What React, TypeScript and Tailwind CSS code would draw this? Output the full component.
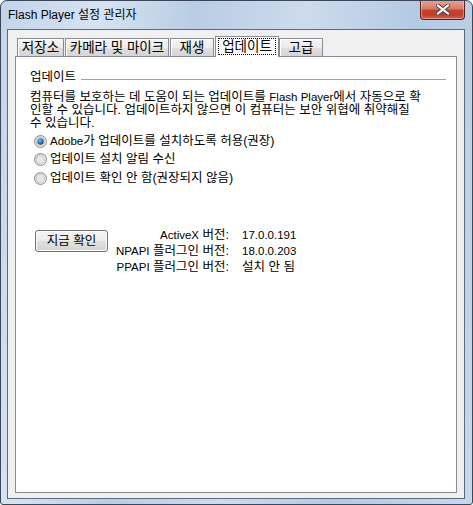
import React from 'react';

// Win7-style radio button drawn as svg
function Radio({ checked }: { checked?: boolean }) {
  return (
    <svg width="13" height="13" viewBox="0 0 13 13" className="shrink-0">
      <defs>
        <linearGradient id="rbg" x1="0" y1="0" x2="1" y2="1">
          <stop offset="0" stopColor="#cfcfcf" />
          <stop offset="1" stopColor="#f7f7f7" />
        </linearGradient>
        <radialGradient id="rdot" cx="0.4" cy="0.35" r="0.7">
          <stop offset="0" stopColor="#7ec4f5" />
          <stop offset="0.5" stopColor="#2a7fc6" />
          <stop offset="1" stopColor="#0f3f6e" />
        </radialGradient>
      </defs>
      <circle cx="6.5" cy="6.5" r="6" fill="url(#rbg)" stroke="#8e8f8f" strokeWidth="1" />
      <circle cx="6.5" cy="6.5" r="4.2" fill="#e6e6e6" stroke="#b9b9b9" strokeWidth="0.6" />
      {checked && <circle cx="6.5" cy="6.5" r="3.2" fill="url(#rdot)" />}
    </svg>
  );
}

// latin runs are a touch narrower than the hangul in the original
function L({ children }: { children: React.ReactNode }) {
  return <span className="text-[11.5px]">{children}</span>;
}

const tabs = [
  { label: '저장소', w: 'w-[47px]' },
  { label: '카메라 및 마이크', w: 'w-[104px]' },
  { label: '재생', w: 'w-[44px]' },
];

const tabBg =
  'bg-[linear-gradient(180deg,#f4f4f4_0%,#ececec_50%,#e0e0e0_51%,#d4d4d4_100%)]';

export default function App() {
  return (
    <div className="w-[473px] h-[505px] flex flex-col border border-[#3b4757] rounded-t-[7px] rounded-b-[3px] px-[6px] pr-[7px] pb-[5px] bg-[linear-gradient(100deg,#c2d5ea_0%,#d6e3f1_18%,#b8cde4_35%,#cddbed_55%,#b3cae3_75%,#c7d8ec_100%)] font-['Liberation_Sans','Noto_Sans_CJK_KR',sans-serif] text-[12.5px] text-black overflow-hidden">
      {/* Title bar */}
      <div className="h-[28px] flex items-start justify-between shrink-0">
        <div className="ml-[1px] h-[27px] flex items-center text-[12px] leading-[14px] text-black">
          Flash Player 설정 관리자
        </div>
        <div className="-mt-[1px] w-[45px] h-[20px] rounded-b-[4px] border border-[#5a2016] border-t-0 bg-[linear-gradient(180deg,#e7a797_0%,#d77c69_45%,#c2432c_55%,#c53f2a_80%,#d9654a_100%)] flex items-center justify-center shadow-[inset_0_0_0_1px_rgba(255,255,255,0.35)]">
          <svg width="14" height="11" viewBox="0 0 14 11">
            <path d="M2 1.5 L12 9.5 M12 1.5 L2 9.5" stroke="#4a3b3b" strokeWidth="4" strokeLinecap="square" />
            <path d="M2 1.5 L12 9.5 M12 1.5 L2 9.5" stroke="#ffffff" strokeWidth="2.2" strokeLinecap="square" />
          </svg>
        </div>
      </div>

      {/* Client area */}
      <div className="flex-1 flex flex-col border border-[#5b6a7c] bg-[#f0f0f0] px-[7px] pt-[6px] pb-[5px]">
        {/* Tabs */}
        <div className="h-[21px] flex items-end pl-[2px] shrink-0 text-[13.5px]">
          {tabs.map((t) => (
            <div
              key={t.label}
              className={`${t.w} h-[18px] mb-[1px] mr-[1px] border border-b-0 border-[#898c95] ${tabBg} flex items-center justify-center leading-[14px] shadow-[inset_1px_1px_0_#ffffff] whitespace-nowrap`}
            >
              {t.label}
            </div>
          ))}
          <div className="relative z-10 w-[64px] h-[21px] border border-b-0 border-[#898c95] bg-white flex items-start justify-center pt-[1px]">
            <span className="w-[58px] h-[17px] border border-dotted border-black flex items-center justify-center leading-[14px]">
              업데이트
            </span>
          </div>
          <div className={`w-[44px] h-[18px] mb-[1px] border border-b-0 border-[#898c95] ${tabBg} flex items-center justify-center leading-[14px] shadow-[inset_1px_1px_0_#ffffff]`}>
            고급
          </div>
        </div>

        {/* Tab panel */}
        <div className="-mt-[1px] flex-1 bg-white border border-[#898c95] pl-[14px] pr-[10px] pt-[13px]">
          {/* Group header */}
          <div className="h-[14px] flex items-start">
            <span className="leading-[14px]">업데이트</span>
            <div className="flex-1 ml-[5px] mt-[9px] h-px bg-[#a0a0a0]" />
          </div>

          <div className="mt-[7px] leading-[13px] whitespace-nowrap">
            <div>컴퓨터를 보호하는 데 도움이 되는 업데이트를 <L>Flash Player</L>에서 자동으로 확</div>
            <div>인할 수 있습니다. 업데이트하지 않으면 이 컴퓨터는 보안 위협에 취약해질</div>
            <div>수 있습니다.</div>
          </div>

          <div className="mt-[2px] pl-[4px] flex flex-col">
            <label className="h-[18px] flex items-center gap-[3px] leading-[13px]">
              <Radio checked />
              <span><L>Adobe</L>가 업데이트를 설치하도록 허용(권장)</span>
            </label>
            <label className="h-[19px] flex items-center gap-[3px] leading-[13px]">
              <Radio />
              <span>업데이트 설치 알림 수신</span>
            </label>
            <label className="h-[18px] flex items-center gap-[3px] leading-[13px]">
              <Radio />
              <span>업데이트 확인 안 함(권장되지 않음)</span>
            </label>
          </div>

          {/* Check now + versions */}
          <div className="mt-[40px] flex items-start pl-[5px]">
            <button className={`mt-[3px] w-[73px] h-[22px] rounded-[3px] border border-[#707070] ${tabBg} shadow-[inset_0_0_0_1px_#fcfcfc] flex items-center justify-center leading-[13px]`}>
              지금 확인
            </button>
            <div className="flex flex-col">
              <div className="h-[16px] flex items-center leading-[13px]">
                <span className="w-[121px] text-right"><L>ActiveX</L> 버전:</span>
                <span className="ml-[13px]"><L>17.0.0.191</L></span>
              </div>
              <div className="h-[16px] flex items-center leading-[13px]">
                <span className="w-[121px] text-right"><L>NPAPI</L> 플러그인 버전:</span>
                <span className="ml-[13px]"><L>18.0.0.203</L></span>
              </div>
              <div className="h-[17px] flex items-center leading-[13px]">
                <span className="w-[121px] text-right"><L>PPAPI</L> 플러그인 버전:</span>
                <span className="ml-[13px]">설치 안 됨</span>
              </div>
            </div>
          </div>
        </div>
      </div>
    </div>
  );
}
